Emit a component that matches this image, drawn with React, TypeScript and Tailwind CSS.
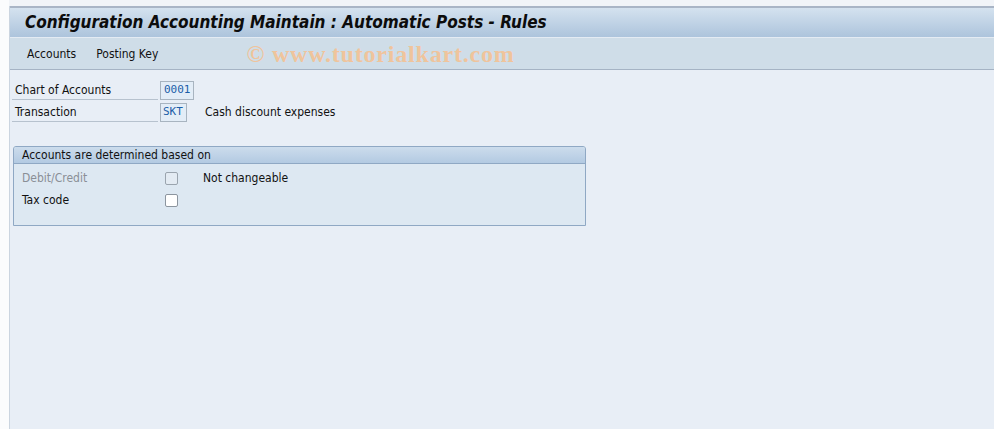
import React from "react";

const font = { fontFamily: "'DejaVu Sans Condensed', 'DejaVu Sans', 'Liberation Sans', sans-serif" };

export default function App() {
  return (
    <div className="w-[994px] h-[429px] flex bg-white overflow-hidden" style={font}>
      <div className="w-[9px] shrink-0 bg-[#fbfcfd]" />
      <div className="flex-1 flex flex-col">
        <div className="h-[6px] bg-[#f1f4f8] shrink-0" />
        <div className="flex-1 flex flex-col border-l border-[#cbd5e0]">
          <div className="h-[2px] bg-[#a9b5c6] shrink-0" />
          <div className="h-[29px] shrink-0 bg-gradient-to-b from-[#d4e2ef] to-[#adc4dc] flex items-center pl-[15px]">
            <span className="text-[17px] font-bold italic text-[#0c0c0c]" style={{ fontFamily: "'DejaVu Sans Condensed', 'DejaVu Sans', sans-serif" }}>
              Configuration Accounting Maintain : Automatic Posts - Rules
            </span>
          </div>
          <div className="h-px bg-[#e4ebf3] shrink-0" />
          <div className="h-[32px] shrink-0 bg-[#cfdde8] border-b border-[#a5b3c4] flex items-center pl-[17px] text-[12px] text-[#111]">
            <span>Accounts</span>
            <span className="ml-[20px]">Posting Key</span>
            <span className="ml-[88px] text-[24px] font-bold tracking-[0.8px] text-[#efc49c]" style={{ fontFamily: "'Liberation Serif', serif" }}>
              © www.tutorialkart.com
            </span>
          </div>
          <div className="flex-1 bg-[#e8eef6] pt-[9px] pl-[2px] text-[12px] text-[#111]">
            <div className="flex items-center h-[22px]">
              <div className="w-[146px] h-[20px] border-b border-[#b7c2ce] flex items-center pl-[3px] self-end mb-[1px]">Chart of Accounts</div>
              <div className="ml-[2px] w-[34px] h-[19px] border border-[#a8b4c0] bg-[#e3edf7] flex items-center px-[3px] text-[#1b5ea8]" style={{ fontFamily: "'DejaVu Sans Mono', monospace", fontSize: 11 }}>0001</div>
            </div>
            <div className="flex items-center h-[22px]">
              <div className="w-[146px] h-[20px] border-b border-[#b7c2ce] flex items-center pl-[3px] self-end mb-[1px]">Transaction</div>
              <div className="ml-[2px] w-[27px] h-[19px] border border-[#a8b4c0] bg-[#e3edf7] flex items-center px-[2px] text-[#1b5ea8]" style={{ fontFamily: "'DejaVu Sans Mono', monospace", fontSize: 11 }}>SKT</div>
              <span className="ml-[18px]">Cash discount expenses</span>
            </div>
            <div className="mt-[23px] ml-[1px] w-[573px] h-[80px] border border-[#8fa8c4] rounded-t-[3px] bg-[#dde8f2] flex flex-col">
              <div className="h-[17px] bg-gradient-to-b from-[#ccdcec] to-[#b3cae2] border-b border-[#8fa8c4] flex items-center pl-[8px] rounded-t-[2px]">
                Accounts are determined based on
              </div>
              <div className="flex items-center h-[22px] mt-[3px] pl-[8px]">
                <span className="w-[143px] text-[#8a8f96]">Debit/Credit</span>
                <span className="w-[13px] h-[13px] border border-[#9aa4ae] rounded-[2px] bg-[#e3ebf3]" />
                <span className="ml-[25px]">Not changeable</span>
              </div>
              <div className="flex items-center h-[22px] pl-[8px]">
                <span className="w-[143px]">Tax code</span>
                <span className="w-[13px] h-[13px] border border-[#8c959f] rounded-[2px] bg-white" />
              </div>
            </div>
          </div>
        </div>
      </div>
    </div>
  );
}
